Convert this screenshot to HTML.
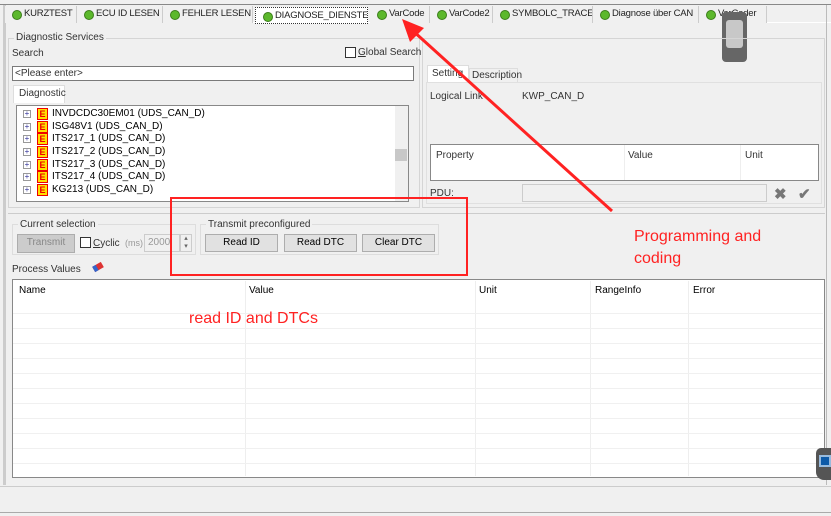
<!DOCTYPE html>
<html><head><meta charset="utf-8"><style>
*{box-sizing:border-box;margin:0;padding:0}
body{width:831px;height:516px;background:#f0f0f0;font-family:"Liberation Sans",sans-serif;font-size:10px;color:#000;position:relative;overflow:hidden}
.a{position:absolute;white-space:nowrap}
.tab{position:absolute;top:6px;height:17px;border-right:1px solid #ccc;padding-left:19px;line-height:16px;font-size:9.5px;letter-spacing:-0.2px;color:#222;background:#f0f0f0;white-space:nowrap;overflow:hidden}
.tab:before{content:"";position:absolute;left:7px;top:4px;width:8px;height:8px;border-radius:50%;background:#5cb82c;border:1px solid #3b7d1a}
.btn{position:absolute;height:18px;border:1px solid #adadad;background:#e1e1e1;text-align:center;line-height:16px;font-size:10px}
.hl{position:absolute;left:13px;width:810px;height:1px;background:#f0f0f0}
.vl{position:absolute;top:281px;height:195px;width:1px;background:#eee}
.tree{position:absolute;left:23px;height:12px;font-size:10px;line-height:12px;white-space:nowrap}
.tree b{display:inline-block;width:11px;height:12px;background:#ffe000;border:1px solid #e00;color:#e00;font-size:9px;text-align:center;line-height:10px;margin:0 4px 0 14px;vertical-align:top}
.tree i{position:absolute;left:0;top:2px;width:8px;height:8px;border:1px solid #999;font-style:normal;font-size:8px;line-height:6px;text-align:center;color:#339}
</style></head><body>
<div class="a" style="left:0;top:0;width:831px;height:5px;border-bottom:1px solid #888;background:#f0f0f0"></div>
<div class="a" style="left:3px;top:5px;width:3px;height:480px;background:#ccc"></div>
<div class="a" style="left:5px;top:22px;width:826px;height:1px;background:#fff"></div>
<div class="tab" style="left:5px;width:72px">KURZTEST</div>
<div class="tab" style="left:77px;width:86px">ECU ID LESEN</div>
<div class="tab" style="left:163px;width:90px">FEHLER LESEN</div>
<div class="tab" style="left:255px;width:113px;top:7px;border:1px dotted #333;background:#fff">DIAGNOSE_DIENSTE</div>
<div class="tab" style="left:370px;width:60px">VarCode</div>
<div class="tab" style="left:430px;width:63px">VarCode2</div>
<div class="tab" style="left:493px;width:100px">SYMBOLC_TRACE</div>
<div class="tab" style="left:593px;width:106px">Diagnose über CAN</div>
<div class="tab" style="left:699px;width:68px">VarCoder</div>
<!-- device icon -->
<div class="a" style="left:722px;top:12px;width:25px;height:50px;background:#666;border-radius:4px"></div>
<div class="a" style="left:726px;top:20px;width:17px;height:28px;background:#c8c8c8;border-radius:3px"></div>
<!-- left group -->
<div class="a" style="left:8px;top:38px;width:412px;height:170px;border:1px solid #d5d5d5"></div>
<div class="a" style="left:14px;top:32px;background:#f0f0f0;padding:0 2px;color:#333">Diagnostic Services</div>
<div class="a" style="left:12px;top:48px;color:#333">Search</div>
<div class="a" style="left:345px;top:47px;width:11px;height:11px;border:1px solid #333;background:#fff"></div>
<div class="a" style="left:358px;top:47px;color:#333"><u>G</u>lobal Search</div>
<div class="a" style="left:12px;top:66px;width:402px;height:15px;border:1px solid #7a7a7a;background:#fff;padding-left:2px;line-height:13px;color:#333">&lt;Please enter&gt;</div>
<div class="a" style="left:13px;top:85px;width:52px;height:18px;border:1px solid #ddd;border-bottom:none;background:#fff;padding:2px 5px;color:#333">Diagnostic</div>
<div class="a" style="left:16px;top:105px;width:393px;height:97px;border:1px solid #888;background:#fff"></div>
<div class="a" style="left:395px;top:106px;width:13px;height:95px;background:#f0f0f0"></div>
<div class="a" style="left:395px;top:149px;width:12px;height:12px;background:#c8c8c8"></div>
<div class="tree" style="top:108px"><i>+</i><b>E</b>INVDCDC30EM01 (UDS_CAN_D)</div>
<div class="tree" style="top:121px"><i>+</i><b>E</b>ISG48V1 (UDS_CAN_D)</div>
<div class="tree" style="top:133px"><i>+</i><b>E</b>ITS217_1 (UDS_CAN_D)</div>
<div class="tree" style="top:146px"><i>+</i><b>E</b>ITS217_2 (UDS_CAN_D)</div>
<div class="tree" style="top:159px"><i>+</i><b>E</b>ITS217_3 (UDS_CAN_D)</div>
<div class="tree" style="top:171px"><i>+</i><b>E</b>ITS217_4 (UDS_CAN_D)</div>
<div class="tree" style="top:184px"><i>+</i><b>E</b>KG213 (UDS_CAN_D)</div>
<!-- right panel -->
<div class="a" style="left:422px;top:38px;width:403px;height:170px;border:1px solid #d5d5d5"></div>
<div class="a" style="left:427px;top:65px;width:42px;height:18px;border:1px solid #ddd;background:#fff;padding:2px 4px;color:#333;overflow:hidden">Setting</div>
<div class="a" style="left:469px;top:68px;width:49px;height:15px;border:1px solid #ddd;padding:1px 2px;color:#333">Description</div>
<div class="a" style="left:426px;top:82px;width:396px;height:122px;border:1px solid #e0e0e0;background:#f0f0f0"></div>
<div class="a" style="left:430px;top:91px;color:#333">Logical Link</div>
<div class="a" style="left:522px;top:91px;color:#333">KWP_CAN_D</div>
<div class="a" style="left:430px;top:144px;width:389px;height:37px;border:1px solid #888;background:#fff"></div>
<div class="a" style="left:624px;top:145px;width:1px;height:35px;background:#eee"></div>
<div class="a" style="left:740px;top:145px;width:1px;height:35px;background:#eee"></div>
<div class="a" style="left:436px;top:150px;color:#333">Property</div>
<div class="a" style="left:628px;top:150px;color:#333">Value</div>
<div class="a" style="left:745px;top:150px;color:#333">Unit</div>
<div class="a" style="left:430px;top:188px;color:#333">PDU:</div>
<div class="a" style="left:522px;top:184px;width:245px;height:18px;border:1px solid #ccc;background:#f0f0f0"></div>
<div class="a" style="left:774px;top:185px;color:#777;font-size:15px;font-weight:bold">✖</div>
<div class="a" style="left:798px;top:185px;color:#777;font-size:15px;font-weight:bold">✔</div>
<div class="a" style="left:8px;top:213px;width:817px;height:1px;background:#ccc"></div>
<!-- current selection -->
<div class="a" style="left:12px;top:224px;width:184px;height:31px;border:1px solid #ddd"></div>
<div class="a" style="left:18px;top:219px;background:#f0f0f0;padding:0 2px;color:#333">Current selection</div>
<div class="btn" style="left:17px;top:234px;width:58px;height:19px;color:#888;background:#ccc">Transmit</div>
<div class="a" style="left:80px;top:237px;width:11px;height:11px;border:1px solid #333;background:#fff"></div>
<div class="a" style="left:93px;top:238px;color:#333"><u>C</u>yclic <span style="color:#999;font-size:9px">&nbsp;(ms)</span></div>
<div class="a" style="left:144px;top:234px;width:36px;height:18px;border:1px solid #ccc;color:#999;padding:2px 3px">2000</div>
<div class="a" style="left:180px;top:234px;width:12px;height:18px;border:1px solid #ccc;font-size:7px;color:#666;text-align:center;line-height:8px">▴<br>▾</div>
<div class="a" style="left:200px;top:224px;width:239px;height:31px;border:1px solid #ddd"></div>
<div class="a" style="left:206px;top:219px;background:#f0f0f0;padding:0 2px;color:#333">Transmit preconfigured</div>
<div class="btn" style="left:205px;top:234px;width:73px">Read ID</div>
<div class="btn" style="left:284px;top:234px;width:73px">Read DTC</div>
<div class="btn" style="left:362px;top:234px;width:73px">Clear DTC</div>
<div class="a" style="left:12px;top:264px;color:#333">Process Values</div>
<div class="a" style="left:93px;top:264px;width:10px;height:6px;background:#d33;transform:rotate(-30deg);border-left:4px solid #36c"></div>
<!-- table -->
<div class="a" style="left:12px;top:279px;width:813px;height:199px;border:1px solid #888;background:#fff"></div>
<div class="vl" style="left:245px"></div><div class="vl" style="left:475px"></div><div class="vl" style="left:590px"></div><div class="vl" style="left:688px"></div>
<div class="a" style="left:19px;top:285px">Name</div>
<div class="a" style="left:249px;top:285px">Value</div>
<div class="a" style="left:479px;top:285px">Unit</div>
<div class="a" style="left:595px;top:285px">RangeInfo</div>
<div class="a" style="left:693px;top:285px">Error</div>
<div class="hl" style="top:313px"></div><div class="hl" style="top:328px"></div><div class="hl" style="top:343px"></div><div class="hl" style="top:358px"></div><div class="hl" style="top:373px"></div><div class="hl" style="top:388px"></div><div class="hl" style="top:403px"></div><div class="hl" style="top:418px"></div><div class="hl" style="top:433px"></div><div class="hl" style="top:448px"></div><div class="hl" style="top:463px"></div>
<div class="a" style="left:826px;top:5px;width:1px;height:480px;background:#bbb"></div>
<div class="a" style="left:816px;top:448px;width:15px;height:32px;background:#555;border-radius:5px 0 0 8px"></div>
<div class="a" style="left:819px;top:455px;width:12px;height:12px;background:#0e5aa7;border:2px solid #9bd"></div>
<div class="a" style="left:0;top:486px;width:831px;height:1px;background:#ccc"></div>
<div class="a" style="left:0;top:512px;width:831px;height:1px;background:#aaa"></div>
<!-- annotations -->
<div class="a" style="left:170px;top:197px;width:298px;height:79px;border:2px solid #f22"></div>
<svg class="a" style="left:0;top:0" width="831" height="516"><line x1="612" y1="211" x2="412" y2="30" stroke="#f22" stroke-width="3"/><polygon points="402,19 424,28 410,42" fill="#f22"/></svg>
<div class="a" style="left:634px;top:226px;color:#f22;font-size:16px;line-height:22px">Programming and<br>coding</div>
<div class="a" style="left:189px;top:310px;color:#f22;font-size:16px">read ID and DTCs</div>
</body></html>
